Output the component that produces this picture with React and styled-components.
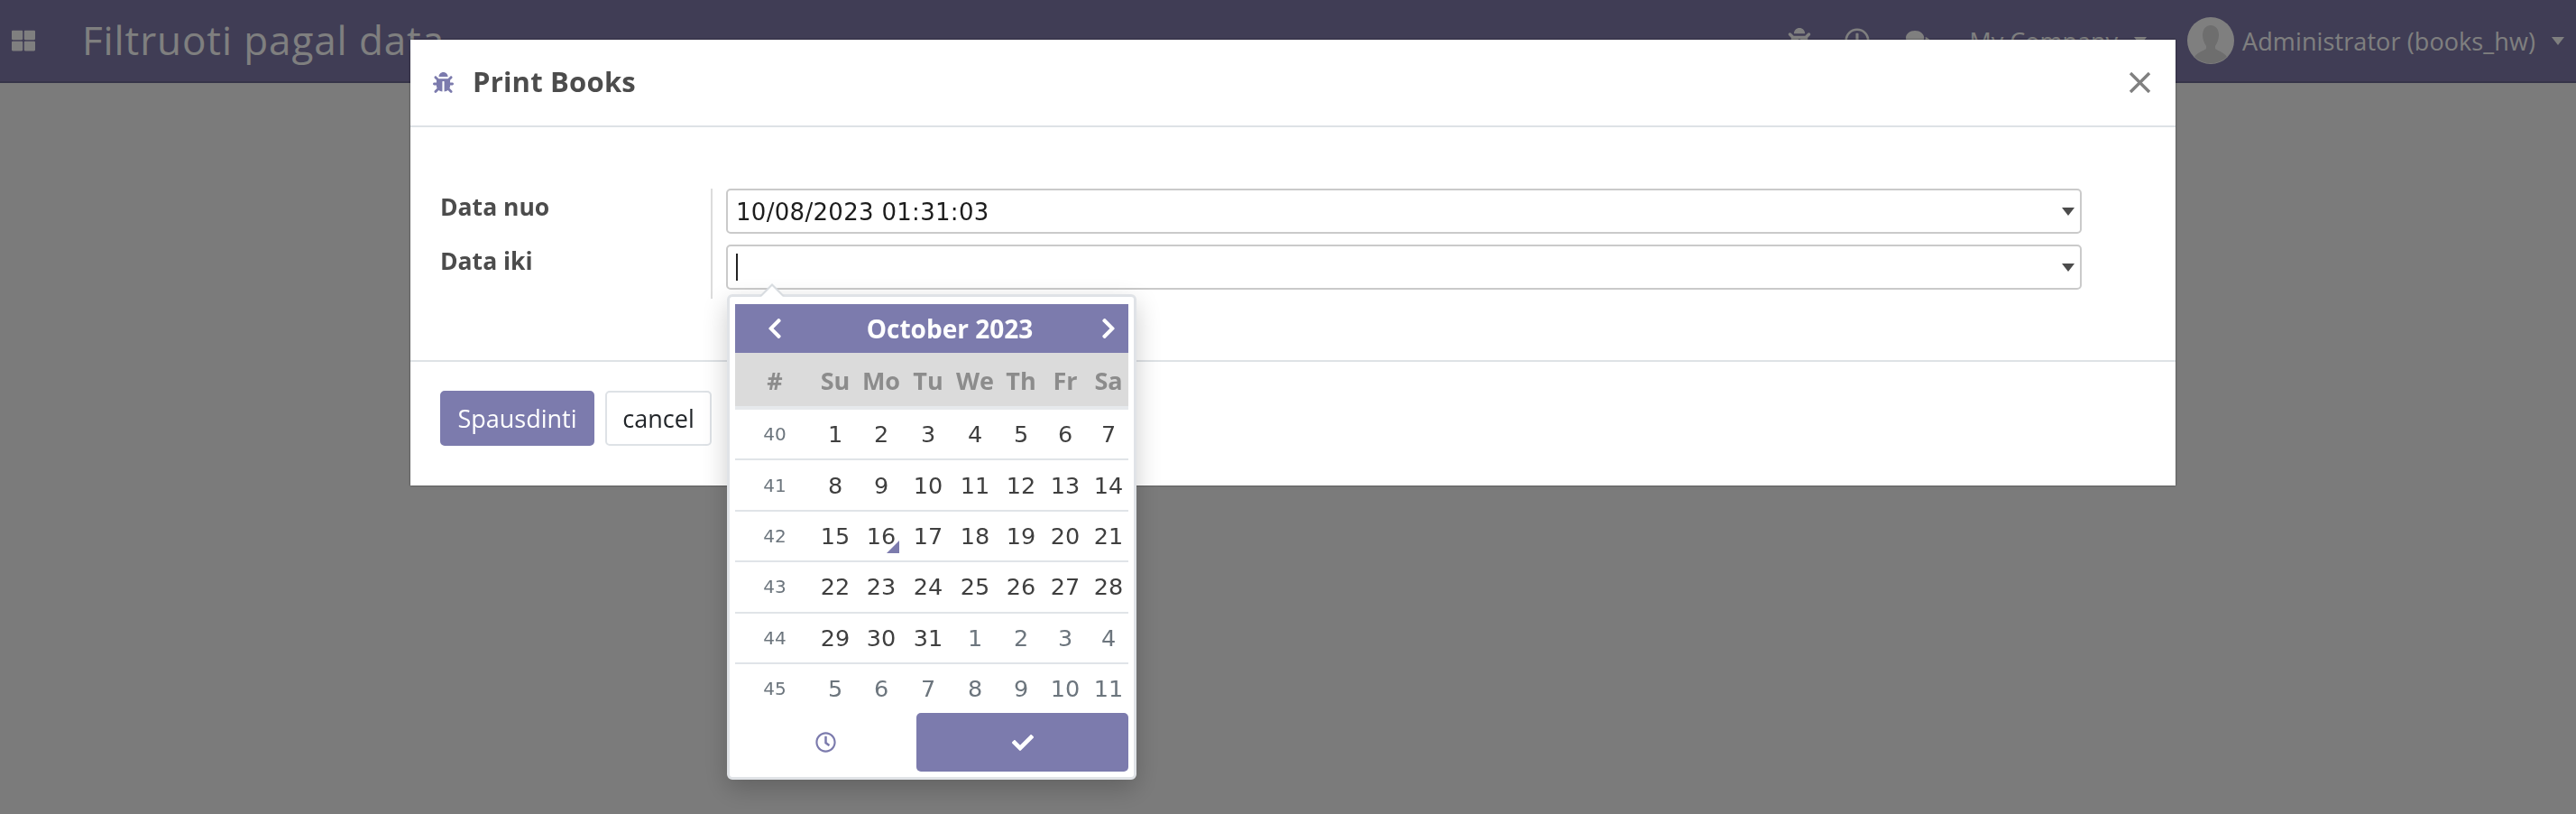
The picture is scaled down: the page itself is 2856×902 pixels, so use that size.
import React from 'react';
import styled, {createGlobalStyle} from 'styled-components';
import {FaBug, FaCheck, FaChevronLeft, FaChevronRight, FaComments, FaRegClock, FaThLarge} from 'react-icons/fa';

const GlobalStyle = createGlobalStyle`
html, body {
	margin: 0;
	padding: 0;
	height: 100%;
	overflow: hidden;
	background: #f6f6f6;
	font-family: 'DejaVu Sans', 'Open Sans', sans-serif;
}
`

const Navbar = styled.header`
height: 90px;
border-bottom: 2px solid #6d6a92;
background: #807aaa;
color: #fff;
display: flex;
align-items: center;
padding-left: 13px;
`

const Apps = styled.span`
display: flex;
font-size: 26px;
margin-right: 52px;
`

const Title = styled.div`
flex: 1;
font-family: 'Open Sans', sans-serif;
font-size: 44px;
letter-spacing: 0.9px;
padding-bottom: 3px;
`

const Systray = styled.div`
display: flex;
align-items: center;
font-size: 27px;
font-family: 'Open Sans', sans-serif;
`

const TrayIcon = styled.span`
display: flex;
font-size: 28px;
margin-right: ${props => props.$gap}px;
`

const UserName = styled.span`
letter-spacing: 0.1px;
`

const Caret = styled.span`
width: 0;
height: 0;
border-left: 7px solid transparent;
border-right: 7px solid transparent;
border-top: 9px solid ${props => props.$color || '#fff'};
margin-left: ${props => props.$left || 0}px;
margin-right: ${props => props.$right || 0}px;
`

const Avatar = styled.svg`
width: 52px;
height: 52px;
margin-right: 9px;
`

const Backdrop = styled.div`
position: fixed;
inset: 0;
background: rgba(0, 0, 0, 0.5);
padding: 44px 0 0 455px;
`

const Dialog = styled.div`
width: 1957px;
height: 494px;
background: #fff;
display: flex;
flex-direction: column;
box-shadow: 0 0 2px rgba(0, 0, 0, 0.6);
`

const DialogHeader = styled.div`
height: 95px;
border-bottom: 2px solid #dee2e6;
display: flex;
align-items: center;
padding: 0 27px 0 25px;
`

const BugIcon = styled.span`
display: flex;
font-size: 23px;
color: #7c7bad;
margin-right: 21px;
`

const DialogTitle = styled.h4`
flex: 1;
margin: 0;
padding-bottom: 3px;
font-family: 'Open Sans', sans-serif;
font-weight: 700;
font-size: 31px;
letter-spacing: 0.2px;
color: #4c4c4c;
`

const Close = styled.svg`
width: 25px;
height: 23px;
`

const DialogBody = styled.div`
height: 260px;
box-sizing: border-box;
padding: 68px 104px 0 33px;
border-bottom: 2px solid #dee2e6;
`

const FormGrid = styled.div`
display: grid;
grid-template-columns: 300px 1fr;
height: 122px;
`

const Labels = styled.div`
display: flex;
flex-direction: column;
`

const Label = styled.label`
height: 60px;
line-height: 40px;
font-family: 'Open Sans', sans-serif;
font-weight: 700;
font-size: 26.5px;
color: #4c4c4c;
`

const Fields = styled.div`
border-left: 2px solid #dcdcdc;
padding-left: 15px;
display: flex;
flex-direction: column;
gap: 12px;
`

const Field = styled.div`
position: relative;
height: 50px;
box-sizing: border-box;
border: 2px solid #cacaca;
border-radius: 5px;
display: flex;
align-items: center;
padding: 0 6px 0 9px;
font-size: 26px;
color: #1d1d1d;
`

const FieldValue = styled.span`
flex: 1;
padding-top: 1px;
letter-spacing: 0.3px;
`

const TextCaret = styled.span`
width: 2px;
height: 30px;
background: #222;
margin-right: auto;
`

const DialogFooter = styled.div`
display: flex;
align-items: flex-start;
gap: 12px;
padding: 32px 33px 0;
`

const Button = styled.button`
height: 61px;
box-sizing: border-box;
padding: 0;
width: ${props => props.$width}px;
border-radius: 5px;
border: 2px solid ${props => props.$primary ? '#7c7bad' : '#dee2e6'};
background: ${props => props.$primary ? '#7c7bad' : '#fff'};
color: ${props => props.$primary ? '#fff' : '#212529'};
font-family: 'Open Sans', sans-serif;
font-size: 27px;
`

const Picker = styled.div`
position: absolute;
top: 53px;
left: -1px;
width: 454px;
height: 538px;
box-sizing: border-box;
background: #fff;
border: 3px solid #e0e3e7;
border-radius: 6px;
padding: 8px 6px 0;
box-shadow: 0 10px 28px rgba(0, 0, 0, 0.2);
color: #3f3f3f;

&:before, &:after {
	content: '';
	position: absolute;
	width: 0;
	height: 0;
	left: 33px;
	border-left: 14px solid transparent;
	border-right: 14px solid transparent;
}
&:before {
	top: -15px;
	border-bottom: 14px solid #d8dce0;
}
&:after {
	top: -12px;
	border-bottom: 14px solid #fff;
}
`

const PickerHead = styled.div`
height: 54px;
background: #7c7bad;
color: #fff;
display: grid;
grid-template-columns: 88px 1fr 44px;
align-items: center;
justify-items: center;
font-size: 26px;
`

const Month = styled.div`
font-family: 'Open Sans', sans-serif;
font-size: 28px;
font-weight: 700;
padding-right: 4px;
`

const Row = styled.div`
display: grid;
grid-template-columns: 88px 46px 56px 48px 56px 46px 52px 44px;
align-items: center;
justify-items: center;
height: ${props => props.$height}px;
box-sizing: border-box;
border-bottom: ${props => props.$last ? 'none' : '2px solid #e0e4e8'};
`

const WeekHead = styled(Row)`
background: #dbdbdb;
padding-top: 2px;
border-bottom: 4px solid #e6e9ec;
color: #8c8c8c;
font-family: 'Open Sans', sans-serif;
font-weight: 700;
font-size: 27px;
`

const WeekNo = styled.span`
font-size: 20px;
color: #6c757d;
`

const Day = styled.span`
position: relative;
justify-self: stretch;
text-align: center;
font-size: 25.5px;
color: ${props => props.$muted ? '#6c757d' : '#3f3f3f'};
`

const TodayMark = styled.span`
position: absolute;
right: 8px;
bottom: -4px;
width: 0;
height: 0;
border-left: 14px solid transparent;
border-bottom: 14px solid #7c7bad;
`

const PickerFoot = styled.div`
display: grid;
grid-template-columns: 201px 235px;
height: 65px;
`

const ClockButton = styled.span`
display: flex;
align-items: center;
justify-content: center;
font-size: 23px;
color: #7c7bad;
`

const ConfirmButton = styled.span`
display: flex;
align-items: center;
justify-content: center;
background: #7c7bad;
color: #fff;
border-radius: 5px;
font-size: 24px;
`

const dayNames = ['Su', 'Mo', 'Tu', 'We', 'Th', 'Fr', 'Sa']

const weeks = [
	{no: 40, days: [1, 2, 3, 4, 5, 6, 7], mutedFrom: 7},
	{no: 41, days: [8, 9, 10, 11, 12, 13, 14], mutedFrom: 7},
	{no: 42, days: [15, 16, 17, 18, 19, 20, 21], mutedFrom: 7},
	{no: 43, days: [22, 23, 24, 25, 26, 27, 28], mutedFrom: 7},
	{no: 44, days: [29, 30, 31, 1, 2, 3, 4], mutedFrom: 3},
	{no: 45, days: [5, 6, 7, 8, 9, 10, 11], mutedFrom: 0}
]

const DatePicker = () => (
	<Picker>
		<PickerHead>
			<FaChevronLeft/>
			<Month>October 2023</Month>
			<FaChevronRight/>
		</PickerHead>
		<WeekHead $height={63}>
			<span>#</span>
			{dayNames.map(name => <span key={name}>{name}</span>)}
		</WeekHead>
		{weeks.map((week, w) => {
			const last = w === weeks.length - 1
			return (
				<Row key={week.no} $height={last ? 54.5 : 56.4} $last={last}>
					<WeekNo>{week.no}</WeekNo>
					{week.days.map((day, i) => (
						<Day key={i} $muted={i >= week.mutedFrom}>
							{day}
							{week.no === 42 && day === 16 && <TodayMark/>}
						</Day>
					))}
				</Row>
			)
		})}
		<PickerFoot>
			<ClockButton><FaRegClock/></ClockButton>
			<ConfirmButton><FaCheck/></ConfirmButton>
		</PickerFoot>
	</Picker>
)

const App = () => (
	<div>
		<GlobalStyle/>
		<Navbar>
			<Apps><FaThLarge/></Apps>
			<Title>Filtruoti pagal data</Title>
			<Systray>
				<TrayIcon $gap={36}><FaBug/></TrayIcon>
				<TrayIcon $gap={40}><FaRegClock/></TrayIcon>
				<TrayIcon $gap={42}><FaComments/></TrayIcon>
				<span>My Company</span>
				<Caret $left={18} $right={45}/>
				<Avatar viewBox="0 0 52 52">
					<circle cx="26" cy="26" r="26" fill="#fff"/>
					<path d="M26 9c-6 0-9 5-9 11 0 5 2 9 4 12v3c-4 3-10 4-13 9a26 26 0 0 0 36 0c-3-5-9-6-13-9v-3c2-3 4-7 4-12 0-6-3-11-9-11z" fill="#dcdcdc"/>
				</Avatar>
				<UserName>Administrator (books_hw)</UserName>
				<Caret $left={18} $right={13}/>
			</Systray>
		</Navbar>
		<Backdrop>
			<Dialog>
				<DialogHeader>
					<BugIcon><FaBug/></BugIcon>
					<DialogTitle>Print Books</DialogTitle>
					<Close viewBox="0 0 25 23">
						<path d="M2 1l21 21M23 1L2 22" stroke="#808080" strokeWidth="3.4" fill="none"/>
					</Close>
				</DialogHeader>
				<DialogBody>
					<FormGrid>
						<Labels>
							<Label>Data nuo</Label>
							<Label>Data iki</Label>
						</Labels>
						<Fields>
							<Field>
								<FieldValue>10/08/2023 01:31:03</FieldValue>
								<Caret $color="#4c4c4c"/>
							</Field>
							<Field>
								<TextCaret/>
								<Caret $color="#4c4c4c"/>
								<DatePicker/>
							</Field>
						</Fields>
					</FormGrid>
				</DialogBody>
				<DialogFooter>
					<Button $primary $width={171}>Spausdinti</Button>
					<Button $width={118}>cancel</Button>
				</DialogFooter>
			</Dialog>
		</Backdrop>
	</div>
)

export default App;
